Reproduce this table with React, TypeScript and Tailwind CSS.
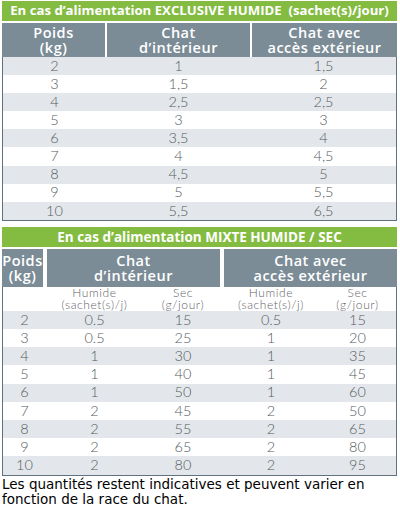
import React from 'react'

const wet = [
  ['2', '1', '1,5'],
  ['3', '1,5', '2'],
  ['4', '2,5', '2,5'],
  ['5', '3', '3'],
  ['6', '3,5', '4'],
  ['7', '4', '4,5'],
  ['8', '4,5', '5'],
  ['9', '5', '5,5'],
  ['10', '5,5', '6,5'],
]

const mixed = [
  ['2', '0.5', '15', '0.5', '15'],
  ['3', '0.5', '25', '1', '20'],
  ['4', '1', '30', '1', '35'],
  ['5', '1', '40', '1', '45'],
  ['6', '1', '50', '1', '60'],
  ['7', '2', '45', '2', '50'],
  ['8', '2', '55', '2', '65'],
  ['9', '2', '65', '2', '80'],
  ['10', '2', '80', '2', '95'],
]

const head = "font-['Open_Sans',sans-serif] font-semibold text-white text-[14.5px] leading-[15px] tracking-[0.5px]"
const cell = "font-['Lato',sans-serif] font-light text-[14.5px] text-[#555b60]"
const sub = 'flex flex-col items-center'

export default function App() {
  return (
    <div className="w-[400px] h-[512px] bg-white pl-[2px] pr-[3px] pt-[1px]">
      {/* exclusive wet */}
      <div className="h-[20px] bg-[#84bc41] flex items-center justify-center font-['Open_Sans',sans-serif] font-bold text-white text-[13.2px] whitespace-pre">
        {'En cas d’alimentation EXCLUSIVE HUMIDE  (sachet(s)/jour)'}
      </div>
      <div className="mt-[2px] grid grid-cols-[103px_143px_1fr] gap-x-[2px] h-[34px]">
        <div className={`bg-[#7b8c97] flex flex-col items-center justify-center ${head}`}>
          <span>Poids</span>
          <span>(kg)</span>
        </div>
        <div className={`bg-[#7b8c97] flex flex-col items-center justify-center ${head}`}>
          <span>Chat</span>
          <span>d’intérieur</span>
        </div>
        <div className={`bg-[#7b8c97] flex flex-col items-center justify-center ${head}`}>
          <span>Chat avec</span>
          <span>accès extérieur</span>
        </div>
      </div>
      <div className="border-x-[1.5px] border-b-[1.5px] border-[#5e7280]">
        {wet.map((r, i) => (
          <div
            key={r[0]}
            className={`grid grid-cols-[103px_145px_1fr] h-[18.1px] items-center ${
              i % 2 === 0 ? 'bg-[#e3e7eb]' : 'bg-white'
            } ${cell}`}
          >
            {r.map((v, j) => (
              <span key={j} className="text-center leading-none">{v}</span>
            ))}
          </div>
        ))}
      </div>

      {/* mixed */}
      <div className="mt-[6px] h-[20px] bg-[#84bc41] flex items-center justify-center font-['Open_Sans',sans-serif] font-bold text-white text-[13.5px]">
        En cas d’alimentation MIXTE HUMIDE / SEC
      </div>
      <div className="mt-[2px] grid grid-cols-[41px_173px_1fr] gap-x-[4px] h-[38px]">
        <div className={`bg-[#7b8c97] flex flex-col items-center justify-center ${head}`}>
          <span>Poids</span>
          <span>(kg)</span>
        </div>
        <div className={`bg-[#7b8c97] flex flex-col items-center justify-center ${head}`}>
          <span>Chat</span>
          <span>d’intérieur</span>
        </div>
        <div className={`bg-[#7b8c97] flex flex-col items-center justify-center ${head}`}>
          <span>Chat avec</span>
          <span>accès extérieur</span>
        </div>
      </div>
      <div className="border-x-[1.5px] border-b-[1.5px] border-[#5e7280]">
        <div className="grid grid-cols-[43px_97px_80px_96px_1fr] h-[24px] items-center font-['Lato',sans-serif] font-light text-[12px] leading-[12.5px] tracking-[0.6px] text-[#5f6468]">
          <span />
          <span className={sub}><span>Humide</span><span>(sachet(s)/j)</span></span>
          <span className={sub}><span>Sec</span><span>(g/jour)</span></span>
          <span className={sub}><span>Humide</span><span>(sachet(s)/j)</span></span>
          <span className={sub}><span>Sec</span><span>(g/jour)</span></span>
        </div>
        {mixed.map((r, i) => (
          <div
            key={r[0]}
            className={`grid grid-cols-[43px_97px_80px_96px_1fr] h-[18.2px] items-center ${
              i % 2 === 0 ? 'bg-[#e3e7eb]' : 'bg-white'
            } ${cell}`}
          >
            {r.map((v, j) => (
              <span key={j} className="text-center leading-none">{v}</span>
            ))}
          </div>
        ))}
      </div>

      <p className="mt-[1px] font-['DejaVu_Sans',sans-serif] text-[13.5px] leading-[15px] text-black">
        Les quantités restent indicatives et peuvent varier en
        <br />
        fonction de la race du chat.
      </p>
    </div>
  )
}
